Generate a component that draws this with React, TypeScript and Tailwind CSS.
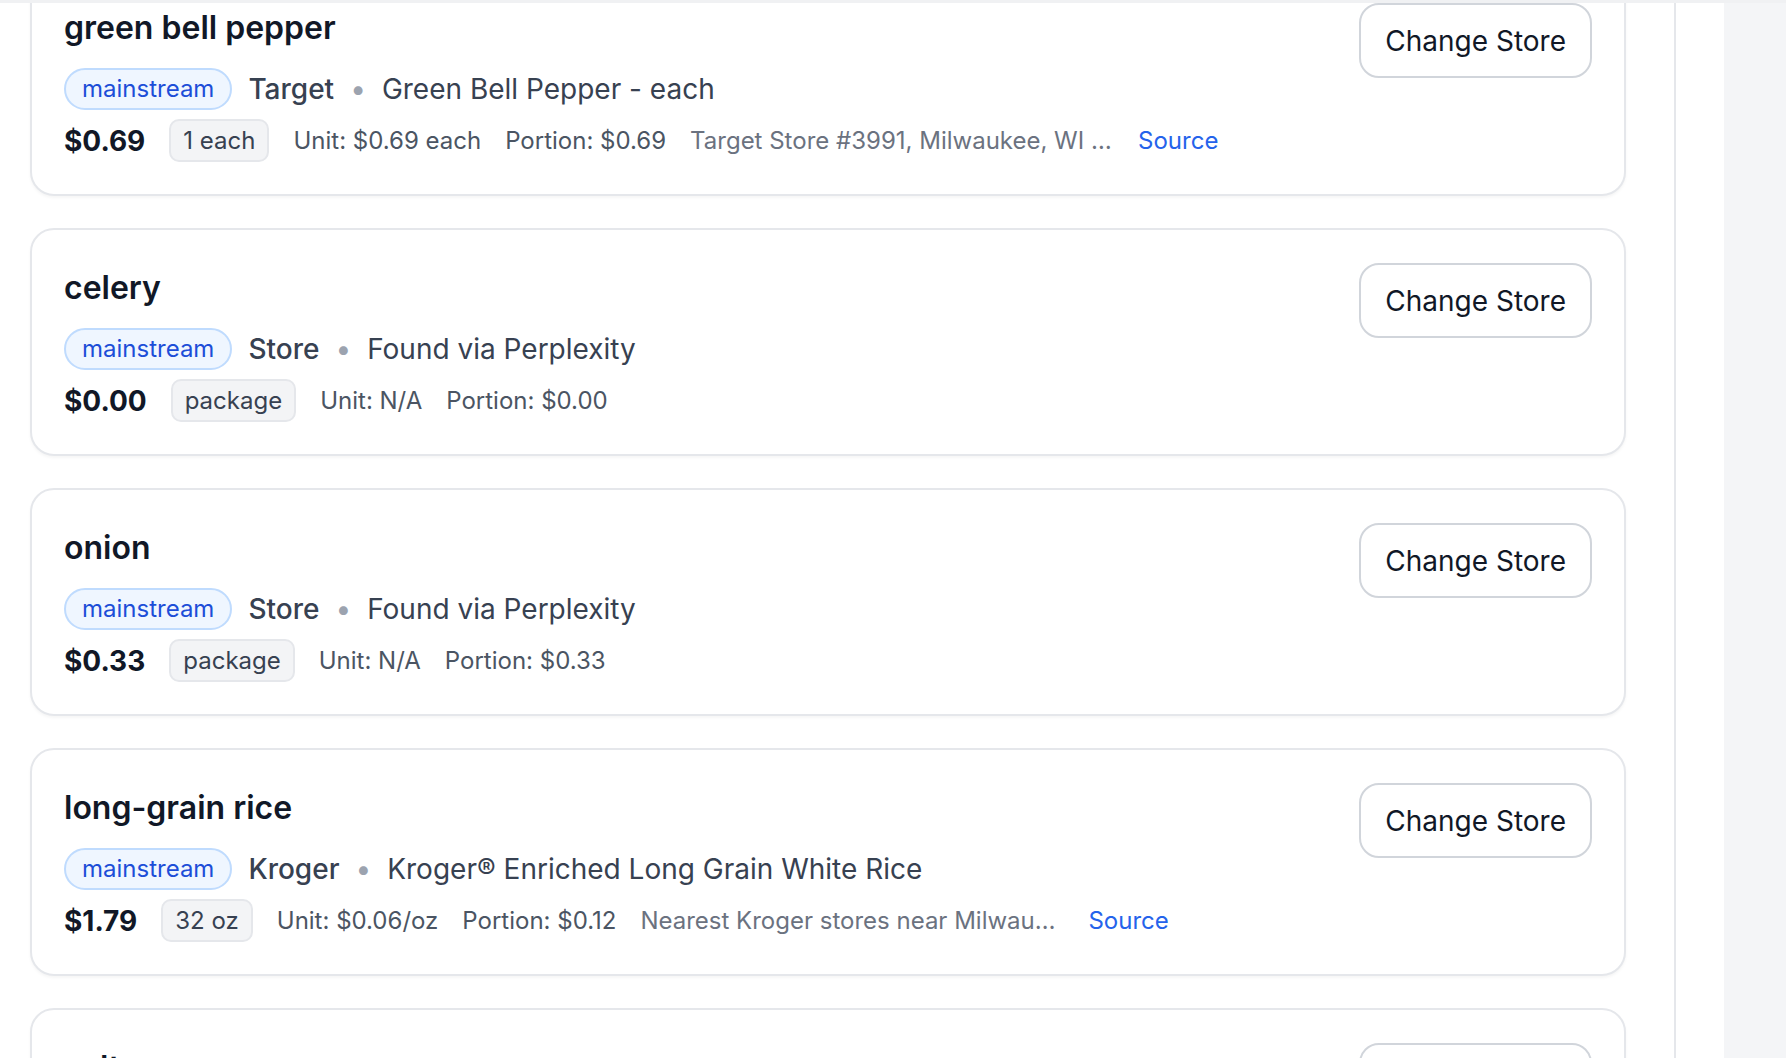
import React from "react";

type Item = {
  name: string;
  store: string;
  product: string;
  price: string;
  size: string;
  unit: string;
  portion: string;
  location?: string;
};

const items: Item[] = [
  {
    name: "green bell pepper",
    store: "Target",
    product: "Green Bell Pepper - each",
    price: "$0.69",
    size: "1 each",
    unit: "Unit: $0.69 each",
    portion: "Portion: $0.69",
    location: "Target Store #3991, Milwaukee, WI …",
  },
  {
    name: "celery",
    store: "Store",
    product: "Found via Perplexity",
    price: "$0.00",
    size: "package",
    unit: "Unit: N/A",
    portion: "Portion: $0.00",
  },
  {
    name: "onion",
    store: "Store",
    product: "Found via Perplexity",
    price: "$0.33",
    size: "package",
    unit: "Unit: N/A",
    portion: "Portion: $0.33",
  },
  {
    name: "long-grain rice",
    store: "Kroger",
    product: "Kroger® Enriched Long Grain White Rice",
    price: "$1.79",
    size: "32 oz",
    unit: "Unit: $0.06/oz",
    portion: "Portion: $0.12",
    location: "Nearest Kroger stores near Milwau…",
  },
  {
    name: "salt",
    store: "Store",
    product: "Found via Perplexity",
    price: "$0.05",
    size: "package",
    unit: "Unit: N/A",
    portion: "Portion: $0.05",
  },
];

function Card({ item }: { item: Item }) {
  return (
    <div className="flex items-start justify-between rounded-[24px] border-2 border-[#e5e7eb] bg-white px-[32px] pb-[32px] pt-[33px] shadow-[0_2px_3px_rgba(0,0,0,0.04)]">
      <div className="flex flex-col">
        <div className="mt-[1px] text-[32px] leading-[48px] font-semibold text-[#111827]">
          {item.name}
        </div>
        <div className="mt-[16px] flex h-[42px] items-center gap-[16px] text-[28px] leading-[40px] text-[#374151]">
          <span className="rounded-full border-2 border-[#bfdbfe] bg-[#eff6ff] px-[16px] py-[3px] text-[24px] leading-[32px] text-[#1d4ed8]">
            mainstream
          </span>
          <span className="font-medium">{item.store}</span>
          <span className="text-[28px] text-[#9ca3af]">•</span>
          <span>{item.product}</span>
        </div>
        <div className="mt-[9px] flex h-[43px] items-center gap-[24px] text-[24px] leading-[32px]">
          <span className="text-[28px] font-bold text-[#111827]">{item.price}</span>
          <span className="flex h-[43px] items-center rounded-[10px] border-2 border-[#e5e7eb] bg-[#f3f4f6] px-[12px] text-[#374151]">
            {item.size}
          </span>
          <span className="text-[#4b5563]">{item.unit}</span>
          <span className="text-[#4b5563]">{item.portion}</span>
          {item.location && (
            <>
              <span className="w-[424px] overflow-hidden whitespace-nowrap text-[#6b7280]">
                {item.location}
              </span>
              <span className="text-[#2563eb]">Source</span>
            </>
          )}
        </div>
      </div>
      <button className="flex h-[75px] items-center rounded-[20px] border-2 border-[#d1d5db] bg-white px-[24px] text-[28px] leading-[40px] text-[#111827]">
        Change Store
      </button>
    </div>
  );
}

export default function App() {
  return (
    <div className="flex h-screen w-full flex-col overflow-hidden bg-white font-['Inter',sans-serif]">
      <div className="relative z-10 h-[3px] shrink-0 bg-[#f0f1f3]" />
      <div className="flex min-h-0 flex-1">
        <div className="flex w-[1724px] shrink-0 bg-white">
          <div className="w-[1676px] border-r-2 border-[#e5e7eb] pl-[30px] pr-[48px]">
            <div className="-mt-[35px] flex flex-col gap-[32px]">
              {items.map((it) => (
                <Card key={it.name} item={it} />
              ))}
            </div>
          </div>
        </div>
        <div className="flex-1 bg-[#f4f5f7]" />
      </div>
    </div>
  );
}
